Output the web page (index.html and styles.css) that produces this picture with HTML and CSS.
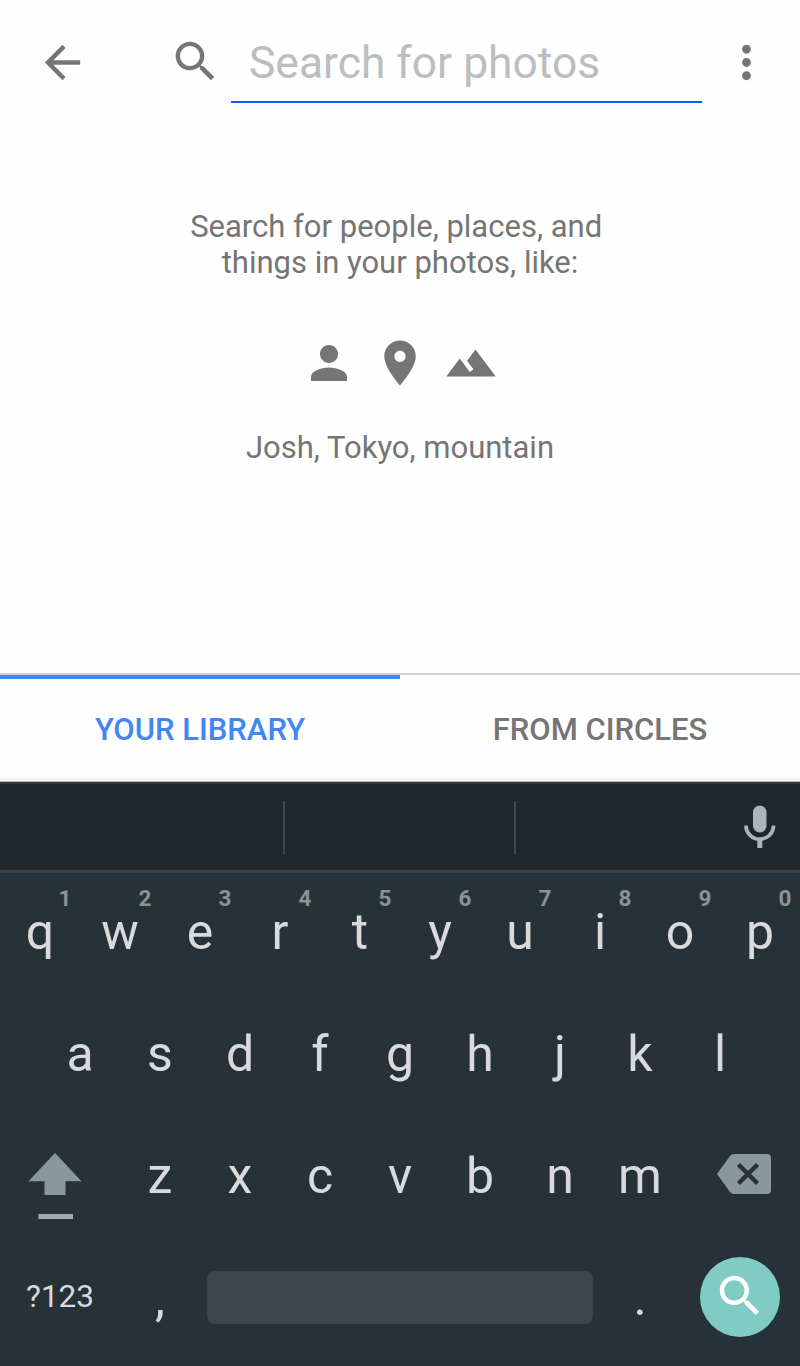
FILE: index.html
```html
<!DOCTYPE html>
<html lang="en">
<head>
    <meta charset="UTF-8">
    <title>Search for photos</title>
    <link rel="stylesheet" href="styles.css">
</head>
<body>
    <div class="toolbar">
        <svg class="icon back" viewBox="0 0 24 24"><path d="M20 11H7.83l5.59-5.59L12 4l-8 8 8 8 1.41-1.41L7.83 13H20v-2z"/></svg>
        <svg class="icon search-icon" viewBox="0 0 24 24"><path d="M15.5 14h-.79l-.28-.27C15.41 12.59 16 11.11 16 9.5 16 5.91 13.09 3 9.5 3S3 5.91 3 9.5 5.91 16 9.5 16c1.61 0 3.09-.59 4.23-1.57l.27.28v.79l5 4.99L20.49 19l-4.99-5zm-6 0C7.01 14 5 11.99 5 9.5S7.01 5 9.5 5 14 7.01 14 9.5 11.99 14 9.5 14z"/></svg>
        <div class="search-field">Search for photos</div>
        <svg class="icon more" viewBox="0 0 24 24"><path d="M12 8c1.1 0 2-.9 2-2s-.9-2-2-2-2 .9-2 2 .9 2 2 2zm0 2c-1.1 0-2 .9-2 2s.9 2 2 2 2-.9 2-2-.9-2-2-2zm0 6c-1.1 0-2 .9-2 2s.9 2 2 2 2-.9 2-2-.9-2-2-2z"/></svg>
    </div>

    <div class="content">
        <p>Search for people, places, and&nbsp;<br>things in your photos, like:</p>
        <div class="examples">
            <svg viewBox="0 0 24 24"><path d="M12 12c2.21 0 4-1.79 4-4s-1.79-4-4-4-4 1.79-4 4 1.79 4 4 4zm0 2c-2.67 0-8 1.34-8 4v2h16v-2c0-2.66-5.33-4-8-4z"/></svg>
            <svg viewBox="0 0 24 24"><path d="M12 2C8.13 2 5 5.13 5 9c0 5.25 7 13 7 13s7-7.75 7-13c0-3.87-3.13-7-7-7zm0 9.5c-1.38 0-2.5-1.12-2.5-2.5s1.12-2.5 2.5-2.5 2.5 1.12 2.5 2.5-1.12 2.5-2.5 2.5z"/></svg>
            <svg viewBox="0 0 24 24"><path d="M14 6l-3.75 5 2.85 3.8-1.6 1.2C9.81 13.75 7 10 7 10l-6 8h22L14 6z"/></svg>
        </div>
        <p>Josh, Tokyo, mountain</p>
    </div>

    <div class="tabs">
        <div class="tab active">YOUR LIBRARY</div>
        <div class="tab">FROM CIRCLES</div>
    </div>

    <div class="keyboard">
        <div class="suggestions">
            <div class="slot first"></div>
            <div class="slot second"></div>
            <svg class="mic" viewBox="0 0 32 44">
                <rect x="9" y="0.5" width="13.5" height="27" rx="6.75"/>
                <path d="M2 20.5a13.75 13.75 0 0 0 27.5 0" fill="none" stroke="#adb4b8" stroke-width="3.8"/>
                <path d="M13.3 34h5v9h-5z"/>
            </svg>
        </div>
        <div class="row">
            <div class="key">q<span class="hint">1</span></div>
            <div class="key">w<span class="hint">2</span></div>
            <div class="key">e<span class="hint">3</span></div>
            <div class="key">r<span class="hint">4</span></div>
            <div class="key">t<span class="hint">5</span></div>
            <div class="key">y<span class="hint">6</span></div>
            <div class="key">u<span class="hint">7</span></div>
            <div class="key">i<span class="hint">8</span></div>
            <div class="key">o<span class="hint">9</span></div>
            <div class="key">p<span class="hint">0</span></div>
        </div>
        <div class="row">
            <div class="key">a</div>
            <div class="key">s</div>
            <div class="key">d</div>
            <div class="key">f</div>
            <div class="key">g</div>
            <div class="key">h</div>
            <div class="key">j</div>
            <div class="key">k</div>
            <div class="key">l</div>
        </div>
        <div class="row">
            <div class="key wide">
                <svg class="shift" viewBox="0 0 54 68">
                    <path d="M27 1L53.5 29.3H37.5V43H16.5V29.3H.5z" fill="#8a979c"/>
                    <path d="M10.5 62H45v5H10.5z" fill="#a3abae"/>
                </svg>
            </div>
            <div class="key">z</div>
            <div class="key">x</div>
            <div class="key">c</div>
            <div class="key">v</div>
            <div class="key">b</div>
            <div class="key">n</div>
            <div class="key">m</div>
            <div class="key wide">
                <svg class="delete" viewBox="0 0 54 40">
                    <path d="M17 0H50a4 4 0 0 1 4 4V36a4 4 0 0 1-4 4H17Q14.5 40 13 38L0 20 13 2Q14.5 0 17 0z" fill="#8a979c"/>
                    <path d="M21.5 10.5l19 19M40.5 10.5l-19 19" stroke="#263238" stroke-width="4.5"/>
                </svg>
            </div>
        </div>
        <div class="row bottom">
            <div class="key wide symbols">?123</div>
            <div class="key">,</div>
            <div class="space"></div>
            <div class="key">.</div>
            <div class="go">
                <svg viewBox="0 0 24 24"><path d="M15.5 14h-.79l-.28-.27C15.41 12.59 16 11.11 16 9.5 16 5.91 13.09 3 9.5 3S3 5.91 3 9.5 5.91 16 9.5 16c1.61 0 3.09-.59 4.23-1.57l.27.28v.79l5 4.99L20.49 19l-4.99-5zm-6 0C7.01 14 5 11.99 5 9.5S7.01 5 9.5 5 14 7.01 14 9.5 11.99 14 9.5 14z"/></svg>
            </div>
        </div>
    </div>
</body>
</html>
```
FILE: styles.css
```css
* {
    box-sizing: border-box;
}

body {
    margin: 0;
    width: 800px;
    height: 1366px;
    display: flex;
    flex-direction: column;
    overflow: hidden;
    background-color: #fefefe;
    font-family: Roboto, sans-serif;
}

svg {
    display: block;
    flex: none;
}

/* top bar */
.toolbar {
    height: 124px;
    display: flex;
    align-items: flex-start;
    padding: 22px 27px 0 36px;
}

.icon {
    width: 53px;
    height: 53px;
    fill: #757575;
}

.back,
.more {
    margin-top: 14px;
}

.search-icon {
    margin: 13px 9px 0 80px;
}

.search-field {
    width: 471px;
    height: 81px;
    padding-left: 18px;
    border-bottom: 2px solid #1558f8;
    color: #bdbdbd;
    font-size: 44.4px;
    line-height: 82px;
}

.more {
    margin-left: 18px;
}

.content {
    height: 549px;
    padding-top: 85px;
    color: #757575;
    font-size: 31px;
    line-height: 36px;
    text-align: center;
}

.content p {
    margin: 0;
}

.examples {
    display: flex;
    justify-content: center;
    gap: 17px;
    margin: 55px 0 40px;
}

.examples svg {
    width: 54px;
    height: 54px;
    fill: #757575;
}

/* tabs */
.tabs {
    display: flex;
    height: 109px;
    border-top: 2px solid #d0d0d0;
    border-bottom: 1px solid #b8babb;
    background: linear-gradient(#fefefe 98px, #fefefe 101px, #f0f0ef 106px);
}

.tab {
    flex: 1;
    padding-top: 4px;
    border-top: 4px solid transparent;
    color: #757575;
    font-size: 31px;
    font-weight: 500;
    line-height: 94px;
    text-align: center;
}

.active {
    border-color: #4285f4;
    color: #4285f4;
}

/* keyboard */
.keyboard {
    flex: 1;
    background-color: #263238;
    color: #d8dadc;
}

.suggestions {
    display: flex;
    align-items: center;
    height: 91px;
    border-top: 2px solid #33393d;
    border-bottom: 3px solid #36434a;
    background-color: #21262a;
}

.slot {
    height: 53px;
    border-right: 2px solid #41474b;
}

.first {
    width: 285px;
}

.second {
    width: 231px;
}

.mic {
    width: 32px;
    height: 44px;
    margin-left: 228px;
    fill: #adb4b8;
}

.row {
    display: flex;
    justify-content: center;
    height: 122px;
}

.key {
    position: relative;
    display: flex;
    justify-content: center;
    width: 80px;
    font-size: 50px;
    line-height: 118px;
}

.hint {
    position: absolute;
    top: 12px;
    left: 55px;
    width: 20px;
    color: #8a9397;
    font-size: 22.5px;
    font-weight: bold;
    line-height: 26px;
    text-align: center;
}

.wide {
    width: 120px;
}

.shift {
    width: 54px;
    height: 68px;
    margin: 35px 10px 0 0;
}

.delete {
    width: 54px;
    height: 40px;
    margin: 37px 0 0 8px;
}

.bottom .symbols {
    font-size: 31.5px;
    line-height: 116px;
}

.space {
    width: 386px;
    height: 53px;
    margin: 32px 7px 0;
    border-radius: 8px;
    background-color: #3c474c;
}

.go {
    width: 80px;
    height: 80px;
    margin: 18px 20px 0;
    border-radius: 50%;
    background-color: #80cbc4;
}

.go svg {
    width: 54px;
    height: 54px;
    margin: 12px 0 0 13px;
    fill: #fff;
}
```
